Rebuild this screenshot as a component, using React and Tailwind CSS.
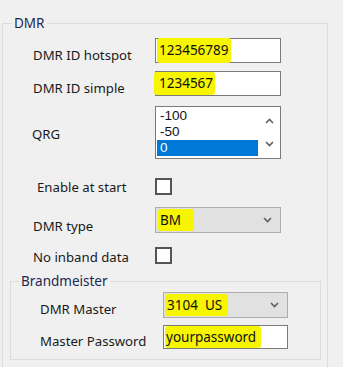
import React from 'react';

const font = { fontFamily: '"Noto Sans", "Open Sans", sans-serif' };

function Mark({ children, className = '' }) {
  return (
    <span className={`bg-[#f7f500] rounded-[3px] ${className}`}>{children}</span>
  );
}

function Chevron({ up = false }) {
  return (
    <svg width="9" height="6" viewBox="0 0 9 6" className="block">
      <polyline
        points={up ? '1,5 4.5,1.5 8,5' : '1,1 4.5,4.5 8,1'}
        fill="none"
        stroke="#606060"
        strokeWidth="1.6"
      />
    </svg>
  );
}

// row height is fixed to the control's height; the label hangs lower like in the WinForms dialog
function Row({ label, labelPad, labelIndent = 'pl-[30px]', h, mt = '', children }) {
  return (
    <div className={`flex items-start ${h} ${mt}`}>
      <div className={`w-[152px] ${labelIndent} ${labelPad} shrink-0 text-[13.2px] leading-[18px] text-[#1a1a1a] whitespace-nowrap`}>
        {label}
      </div>
      {children}
    </div>
  );
}

function TextBox({ children, h = 'h-[25px]', w = 'w-[126px]' }) {
  return (
    <div className={`${w} ${h} bg-white border border-[#7a7a7a] flex items-center pl-[3px] text-[13.5px] text-[#111]`}>
      {children}
    </div>
  );
}

function Combo({ children, w = 'w-[126px]' }) {
  return (
    <div className={`${w} h-[26px] bg-[#e1e1e1] border border-[#adadad] flex items-center justify-between pl-[3px] pr-[8px] text-[13.5px] text-[#111]`}>
      <span className="whitespace-pre">{children}</span>
      <Chevron />
    </div>
  );
}

function CheckBox() {
  return <div className="w-[17px] h-[17px] bg-white border-2 border-[#555]" />;
}

export default function App() {
  return (
    <div className="w-[343px] h-[367px] bg-[#f0f0f0] overflow-hidden pl-[2px] pt-[23px]" style={font}>
      <div className="relative w-[326px] h-[370px] border border-[#dcdcdc]">
        <span className="absolute left-[9px] -top-[10px] bg-[#f0f0f0] px-[2px] text-[13.5px] leading-[18px] text-[#1c2850]">
          DMR
        </span>
        <div className="flex flex-col pt-[14px]">
          <Row label="DMR ID hotspot" labelPad="pt-[8px]" h="h-[25px]">
            <TextBox>
              <Mark className="px-[2px] -ml-[2px] py-[2px]">123456789</Mark>
            </TextBox>
          </Row>
          <Row label="DMR ID simple" labelPad="pt-[8px]" h="h-[25px]" mt="mt-[8px]">
            <TextBox>
              <Mark className="-ml-[5px] pl-[5px] pr-[2px] py-[1px]">1234567</Mark>
            </TextBox>
          </Row>
          <Row label="QRG" labelPad="pt-[19px]" labelIndent="pl-[29px]" h="h-[53px]" mt="mt-[10px]">
            <div className="w-[126px] h-[53px] bg-white border border-[#7a7a7a] flex">
              <div
                className="flex-1 flex flex-col pt-[1px] pl-[1px] text-[13.5px] leading-[16px] text-[#111]"
                style={{ fontFamily: '"Liberation Sans", Arial, sans-serif' }}
              >
                <div className="pl-[3px]">-100</div>
                <div className="pl-[3px]">-50</div>
                <div className="pl-[3px] bg-[#0078d7] text-white">0</div>
              </div>
              <div className="w-[22px] flex flex-col items-center justify-between py-[11px]">
                <Chevron up />
                <Chevron />
              </div>
            </div>
          </Row>
          <Row label="Enable at start" labelPad="pt-0" labelIndent="pl-[34px]" h="h-[17px]" mt="mt-[19px]">
            <CheckBox />
          </Row>
          <Row label="DMR type" labelPad="pt-[10px]" h="h-[26px]" mt="mt-[12px]">
            <Combo>
              <Mark className="px-[2px] -ml-[1px] py-[2px]">BM   </Mark>
            </Combo>
          </Row>
          <Row label="No inband data" labelPad="pt-[1px]" h="h-[17px]" mt="mt-[14px]">
            <CheckBox />
          </Row>

          <div className="relative ml-[7px] mt-[17px] w-[311px] h-[79px] border border-[#dcdcdc]">
            <span className="absolute left-[8px] -top-[10px] bg-[#f0f0f0] px-[2px] text-[13.5px] leading-[18px] text-[#1c2850]">
              Brandmeister
            </span>
            <div className="flex flex-col pt-[10px]">
              <Row label="DMR Master" labelPad="pt-[8px]" labelIndent="pl-[29px]" h="h-[26px]">
                <Combo w="w-[125px]">
                  <Mark className="px-[2px] -ml-[2px] py-[2px]">3104  US </Mark>
                </Combo>
              </Row>
              <Row label="Master Password" labelPad="pt-[7px]" labelIndent="pl-[29px]" h="h-[24px]" mt="mt-[7px]">
                <TextBox h="h-[24px]" w="w-[125px]">
                  <Mark className="-ml-[2px] px-[1px] pr-[5px] py-[1px]">yourpassword</Mark>
                </TextBox>
              </Row>
            </div>
          </div>
        </div>
      </div>
    </div>
  );
}
